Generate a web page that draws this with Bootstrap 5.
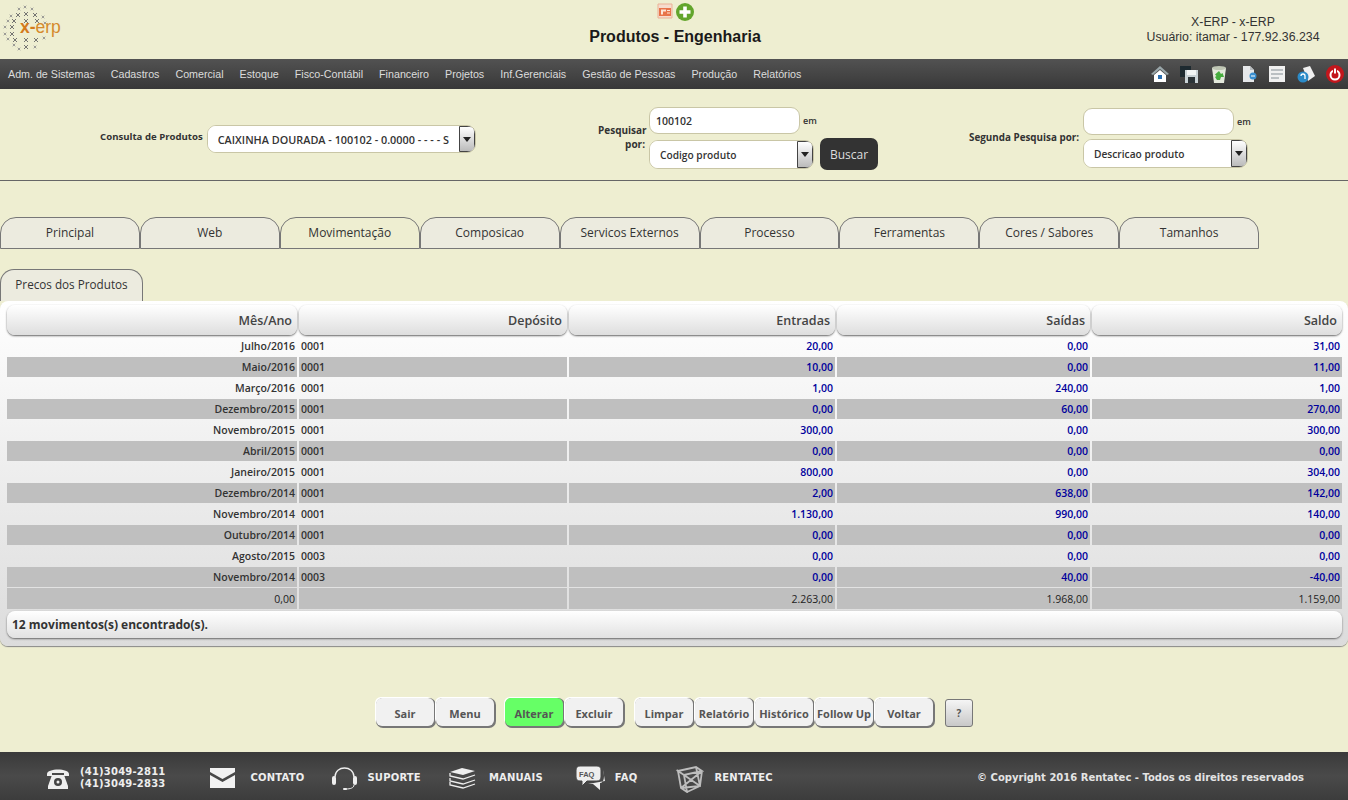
<!DOCTYPE html>
<html lang="pt-BR">
<head>
<meta charset="utf-8">
<title>Produtos - Engenharia</title>
<link href="https://cdn.jsdelivr.net/npm/bootstrap@5.3.0/dist/css/bootstrap.min.css" rel="stylesheet">
<style>
html,body{height:800px;overflow:hidden}
body{background:#eeeed1;font-family:"Open Sans",sans-serif;color:#333;position:relative}
.top{height:59px}
.logo{width:300px;padding-left:2px;padding-top:4px}
.logo svg{display:block}
.head-title{width:750px}
.head-title .ic{height:24px;padding-top:3px;padding-left:1px;gap:3px}
.head-title h1{font:bold 16px/20px "Liberation Sans",sans-serif;color:#1a1a1a;margin:3px 0 0}
.who{font:12.3px/15px "Liberation Sans",sans-serif;color:#333;width:176px;margin-right:27px;padding-top:15px;white-space:nowrap}
.topnav{height:30px;padding:0;background:linear-gradient(#525252,#383838)}
.topnav .nav{padding-left:8px;gap:16px}
.topnav .nav-link{font:10.7px/30px "Liberation Sans",sans-serif;color:#dcdcdc;padding:0}
.tools{margin-left:auto;padding-right:4px;gap:11px}
.tools svg{display:block}
.m2{margin-left:2px}.m4{margin-left:4px}.m1{margin-left:1px}
.search{height:92px;border-bottom:1px solid #666;padding-left:100px}
.lbl{font:bold 10px/14px "Open Sans",sans-serif;color:#333;text-align:right}
.nw{white-space:nowrap}
.g1{width:376px;padding-top:36px}
.g1 .lbl{width:103px;margin-right:4px;padding-top:5px;font-size:9.6px}
.xsel{display:flex;background:#fff;border:1px solid #c9c6a6;border-radius:9px;overflow:hidden}
.xsel select{appearance:none;border:0;background:#fff;flex:1 1 0;min-width:0;font:600 10.2px "Open Sans",sans-serif;color:#333;outline:0;padding:0 0 0 10px}
.xsel.s1 select{font-size:10.85px}
.xsel .arr{flex:0 0 16px;border:1px solid #444;border-radius:0 5px 5px 0;background:linear-gradient(#fff,#bbb);display:flex;align-items:center;justify-content:center}
.xsel.s1{width:270px;height:28px}
.xsel.s2{width:165px;height:29px}
.xinp{width:151px;height:27px;border:1px solid #c9c6a6;border-radius:9px;background:#fff;font:600 10.5px "Open Sans",sans-serif;color:#333;padding:0 6px;outline:0}
.em{font:600 9px/14px "Open Sans",sans-serif;color:#333;margin-left:3px}
.g2{margin-left:122px;width:280px;padding-top:18px}
.g2 .lbl{width:47px;margin-right:4px;padding-top:16px}
.btn-buscar{background:#333;color:#ddd;border:0;border-radius:7px;width:58px;height:32px;font:12px "Open Sans",sans-serif;padding:0;margin-left:6px}
.g2 .bot{margin-top:4px}
.g2 .xsel{margin-top:1px}
.g3{margin-left:91px;padding-top:19px}
.g3 .lbl{width:110px;margin-right:4px;padding-top:22px;font-size:9.85px}
.g3 .bot{margin-top:4px}
.tabs{padding-top:36px;flex-wrap:nowrap}
.tabs .nav-link{width:139.92px;height:32px;background:#ecebdf;border:1px solid #777;border-radius:16px 16px 0 0;font:12px/29px "Open Sans",sans-serif;color:#333;padding:0;text-align:center}
.tabs .nav-link.active{background:#eeeed1}
.sub{padding-top:20px}
.sub .nav-link{width:143px;height:32px;background:#ecebdf;border:1px solid #777;border-bottom:0;border-radius:14px 14px 0 0;font:11.7px/29px "Open Sans",sans-serif;color:#333;padding:0;text-align:center}
.panel-grid{background:linear-gradient(#fff,#dcdcdc);border-radius:8px;height:345px;padding:3px 0 0 5px;box-shadow:0 1px 1px #888}
.grid{width:1339px;table-layout:fixed;border-collapse:separate;border-spacing:2px 1px;margin:0;--bs-table-bg:transparent}
.c1{width:290px}.c2{width:268px}.c3{width:266px}.c4{width:253px}.c5{width:250px}
.grid>*>tr>*{padding:0 2px;border:0;height:20px;font:600 10.5px/20px "Open Sans",sans-serif;color:#333;vertical-align:middle;white-space:nowrap;background:transparent;box-shadow:none}
.grid th{text-align:right}
.grid>thead>tr>th{height:30px;font:600 12.5px/28px "Open Sans",sans-serif;color:#444;padding:2px 5px 0 3px;background:linear-gradient(#fff,#dedede);border-radius:8px;box-shadow:0 1px 2px #666}
.grid td.num{text-align:right}
.grid tbody td.num{color:#00009c}
.grid>tbody>tr:nth-child(even)>*{background:#bfbfbf}
.grid>tbody>tr.tot>*{height:21px;background:#bfbfbf;color:#222;font-weight:400}
.status{margin:1px 6px 0 2px;height:27px;border-radius:8px;background:linear-gradient(#fff,#e2e2e2);box-shadow:0 1px 2px #666;font:700 12px/27px "Open Sans",sans-serif;color:#333;padding-left:5px}
.actions{padding-top:52px;padding-left:376px;height:106px}
.xbtn{width:58px;height:28px;margin-right:2px;background:#f1f1f1;border:0;border-radius:6px;box-shadow:1px 1px 0 1px #777,-1px -1px 0 #fff;font:700 11px "Open Sans",sans-serif;color:#555;padding:2px 0 0}
.xbtn.go{background:#66ff66}
.sep{margin-left:9px}
.sep2{margin-left:10px}
.help{width:28px;height:28px;margin:1px 0 0 10px;border:1px solid #777;border-radius:3px;background:linear-gradient(#f5f5f5,#c8c8c8);font:700 10px "Open Sans",sans-serif;color:#555;padding:0}
.foot{height:48px;padding-top:4px;background:linear-gradient(#3a3a3a,#4a4a4a 50%,#3c3c3c);color:#eee;font:bold 10px/12px "DejaVu Sans",sans-serif;letter-spacing:.2px}
.foot .it{gap:10px}
.foot svg{display:block;flex:none}
.foot a{color:#eee;text-decoration:none}
.i1{margin-left:46px}.i2{margin-left:45px}.i3{margin-left:28px}.i4{margin-left:28px}.i5{margin-left:33px}.i6{margin-left:38px}
.mail{margin-right:5px}.book{margin-right:3px}
.copy{margin-left:auto;padding-right:44px;color:#e4e4e4;letter-spacing:0}
.faqt{font:bold 7.5px "Liberation Sans",sans-serif;fill:#555;letter-spacing:0}
</style>
</head>
<body>
<header class="top d-flex">
  <div class="logo">
    <svg width="60" height="50" viewBox="0 0 60 50" role="img" aria-label="x-erp">
      <defs>
        <path id="m" d="M-2-2L2 2M2-2L-2 2" stroke="#666" stroke-width=".9" fill="none"/>
        <path id="s" d="M-1.300-1.300L1.300 1.300M1.300-1.300L-1.300 1.300" stroke="#888" stroke-width=".8" fill="none"/>
      </defs>
      <use href="#s" x="17" y="5"/><use href="#s" x="23" y="3"/><use href="#s" x="30" y="5"/>
      <use href="#s" x="9" y="12"/><use href="#m" x="16" y="11"/><use href="#m" x="24" y="10"/><use href="#m" x="33" y="11"/><use href="#s" x="41" y="13"/>
      <use href="#s" x="6" y="17"/><use href="#m" x="12" y="17"/><use href="#m" x="24" y="17"/><use href="#m" x="35" y="17"/><use href="#s" x="43" y="19"/>
      <use href="#s" x="3" y="23"/><use href="#m" x="10" y="23"/>
      <use href="#s" x="3" y="30"/><use href="#m" x="10" y="30"/>
      <use href="#s" x="6" y="35"/><use href="#m" x="13" y="36"/><use href="#m" x="24" y="36"/><use href="#m" x="34" y="36"/><use href="#s" x="42" y="34"/>
      <use href="#s" x="12" y="41"/><use href="#m" x="24" y="43"/><use href="#s" x="33" y="43"/><use href="#s" x="17" y="45"/>
      <text x="18" y="29" font-family="Liberation Sans, sans-serif" font-size="17.5" fill="#d58a2c"><tspan font-weight="700" fill="#d47a1c">x-</tspan>erp</text>
    </svg>
  </div>
  <div class="head-title text-center">
    <div class="ic d-flex justify-content-center">
      <svg width="16" height="16" viewBox="0 0 16 16"><path d="M1 1h14v14H1z" fill="#f6dccd" stroke="#eab196"/><path d="M2 5h12v8H2z" fill="#e8744a"/><path d="M4 6.500h5v2H6v3H4zM10 7h3v1h-3zM10 9.500h3v1h-3z" fill="#fde5d8"/></svg>
      <svg width="18" height="18" viewBox="0 0 18 18"><circle cx="9" cy="9" r="9" fill="#62a52c"/><path d="M7.200 3.500h3.600v3.700h3.700v3.600h-3.700v3.700H7.200v-3.700H3.500V7.200h3.700z" fill="#fff"/></svg>
    </div>
    <h1>Produtos - Engenharia</h1>
  </div>
  <div class="who text-center ms-auto">X-ERP - x-ERP<br>Usuário: itamar - 177.92.36.234</div>
</header>
<nav class="navbar topnav">
  <ul class="nav">
    <li class="nav-item"><a class="nav-link" href="#">Adm. de Sistemas</a></li>
    <li class="nav-item"><a class="nav-link" href="#">Cadastros</a></li>
    <li class="nav-item"><a class="nav-link" href="#">Comercial</a></li>
    <li class="nav-item"><a class="nav-link" href="#">Estoque</a></li>
    <li class="nav-item"><a class="nav-link" href="#">Fisco-Contábil</a></li>
    <li class="nav-item"><a class="nav-link" href="#">Financeiro</a></li>
    <li class="nav-item"><a class="nav-link" href="#">Projetos</a></li>
    <li class="nav-item"><a class="nav-link" href="#">Inf.Gerenciais</a></li>
    <li class="nav-item"><a class="nav-link" href="#">Gestão de Pessoas</a></li>
    <li class="nav-item"><a class="nav-link" href="#">Produção</a></li>
    <li class="nav-item"><a class="nav-link" href="#">Relatórios</a></li>
  </ul>
  <div class="tools d-flex align-items-center">
    <svg width="18" height="18" viewBox="0 0 18 18"><path d="M9 1L0 9l2 1 7-6 7 6 2-1z" fill="#9aa7aa"/><path d="M3 10l6-5 6 5v7H3z" fill="#fff"/><path d="M7 10h4v4H7z" fill="#2b6fb0"/></svg>
    <svg width="18" height="18" viewBox="0 0 18 18"><path d="M0 1h11v11H0z" fill="#1e2a30"/><path d="M5 5h13v13H5z" fill="#c9d2d6"/><path d="M7 5h9v5H7z" fill="#f2f5f5"/><path d="M8 12h7v6H8z" fill="#2c3438"/></svg>
    <svg class="m2" width="16" height="18" viewBox="0 0 16 18"><path d="M1 3h14l-2 15H3z" fill="#e4e9dc"/><ellipse cx="8" cy="3" rx="7" ry="2" fill="#bfc6b4"/><path d="M8 6l2 3 1.500-1L13 12h-3l-1 3H6l-2-3 1.500-1L4 9.500z" fill="#46ad3e"/></svg>
    <svg class="m4" width="15" height="18" viewBox="0 0 15 18"><path d="M1 1h7l4 4v12H1z" fill="#e6e8ea"/><path d="M8 1l4 4H8z" fill="#b9bdc0"/><circle cx="11" cy="11" r="3.500" fill="#3a8fd0"/><path d="M9 11h4" stroke="#fff"/></svg>
    <svg class="m1" width="16" height="18" viewBox="0 0 16 18"><path d="M0 1h16v16H0z" fill="#f0f0f0"/><path d="M2 5h12M2 9h12M2 13h8" stroke="#a8aeb2" stroke-width="1.500"/></svg>
    <svg class="m1" width="18" height="18" viewBox="0 0 18 18"><path d="M6 3l7-2 5 10-7 5z" fill="#f0f0f0"/><circle cx="6" cy="12" r="5.500" fill="#2b8bc8"/><path d="M4 11a2 2 0 0 1 4 0v3" stroke="#fff" fill="none" stroke-width="1.300"/></svg>
    <svg width="18" height="18" viewBox="0 0 18 18"><circle cx="9" cy="9" r="9" fill="#c4161c"/><circle cx="9" cy="10" r="4.500" fill="none" stroke="#fff" stroke-width="2"/><path d="M9 3v6" stroke="#c4161c" stroke-width="4"/><path d="M9 3.500v5" stroke="#fff" stroke-width="2"/></svg>
  </div>
</nav>
<section class="search d-flex">
  <div class="g1 d-flex">
    <label class="lbl nw">Consulta de Produtos</label>
    <div class="xsel s1"><select aria-label="Consulta de Produtos"><option>CAIXINHA DOURADA - 100102 - 0.0000 - - - - S</option></select><span class="arr"><svg width="8" height="5" viewBox="0 0 8 5"><path d="M0 0h8L4 5z" fill="#222"/></svg></span></div>
  </div>
  <div class="g2 d-flex">
    <label class="lbl">Pesquisar por:</label>
    <div>
      <div class="d-flex align-items-center"><input class="xinp" value="100102" aria-label="Pesquisar"><span class="em">em</span></div>
      <div class="bot d-flex align-items-center"><div class="xsel s2"><select aria-label="Campo"><option>Codigo produto</option></select><span class="arr"><svg width="8" height="5" viewBox="0 0 8 5"><path d="M0 0h8L4 5z" fill="#222"/></svg></span></div><button class="btn btn-buscar" type="button">Buscar</button></div>
    </div>
  </div>
  <div class="g3 d-flex">
    <label class="lbl nw">Segunda Pesquisa por:</label>
    <div>
      <div class="d-flex align-items-center"><input class="xinp" aria-label="Segunda pesquisa"><span class="em">em</span></div>
      <div class="bot"><div class="xsel s2"><select aria-label="Campo 2"><option>Descricao produto</option></select><span class="arr"><svg width="8" height="5" viewBox="0 0 8 5"><path d="M0 0h8L4 5z" fill="#222"/></svg></span></div></div>
    </div>
  </div>
</section>
<ul class="nav tabs">
  <li><a class="nav-link" href="#">Principal</a></li>
  <li><a class="nav-link" href="#">Web</a></li>
  <li><a class="nav-link active" href="#">Movimentação</a></li>
  <li><a class="nav-link" href="#">Composicao</a></li>
  <li><a class="nav-link" href="#">Servicos Externos</a></li>
  <li><a class="nav-link" href="#">Processo</a></li>
  <li><a class="nav-link" href="#">Ferramentas</a></li>
  <li><a class="nav-link" href="#">Cores / Sabores</a></li>
  <li><a class="nav-link" href="#">Tamanhos</a></li>
</ul>
<ul class="nav sub"><li><a class="nav-link" href="#">Precos dos Produtos</a></li></ul>
<div class="panel-grid">
  <table class="table grid">
    <colgroup><col class="c1"><col class="c2"><col class="c3"><col class="c4"><col class="c5"></colgroup>
    <thead><tr><th>Mês/Ano</th><th>Depósito</th><th>Entradas</th><th>Saídas</th><th>Saldo</th></tr></thead>
    <tbody>
      <tr><th>Julho/2016</th><td>0001</td><td class="num">20,00</td><td class="num">0,00</td><td class="num">31,00</td></tr>
      <tr><th>Maio/2016</th><td>0001</td><td class="num">10,00</td><td class="num">0,00</td><td class="num">11,00</td></tr>
      <tr><th>Março/2016</th><td>0001</td><td class="num">1,00</td><td class="num">240,00</td><td class="num">1,00</td></tr>
      <tr><th>Dezembro/2015</th><td>0001</td><td class="num">0,00</td><td class="num">60,00</td><td class="num">270,00</td></tr>
      <tr><th>Novembro/2015</th><td>0001</td><td class="num">300,00</td><td class="num">0,00</td><td class="num">300,00</td></tr>
      <tr><th>Abril/2015</th><td>0001</td><td class="num">0,00</td><td class="num">0,00</td><td class="num">0,00</td></tr>
      <tr><th>Janeiro/2015</th><td>0001</td><td class="num">800,00</td><td class="num">0,00</td><td class="num">304,00</td></tr>
      <tr><th>Dezembro/2014</th><td>0001</td><td class="num">2,00</td><td class="num">638,00</td><td class="num">142,00</td></tr>
      <tr><th>Novembro/2014</th><td>0001</td><td class="num">1.130,00</td><td class="num">990,00</td><td class="num">140,00</td></tr>
      <tr><th>Outubro/2014</th><td>0001</td><td class="num">0,00</td><td class="num">0,00</td><td class="num">0,00</td></tr>
      <tr><th>Agosto/2015</th><td>0003</td><td class="num">0,00</td><td class="num">0,00</td><td class="num">0,00</td></tr>
      <tr><th>Novembro/2014</th><td>0003</td><td class="num">0,00</td><td class="num">40,00</td><td class="num">-40,00</td></tr>
      <tr class="tot"><th>0,00</th><td></td><td class="num">2.263,00</td><td class="num">1.968,00</td><td class="num">1.159,00</td></tr>
    </tbody>
  </table>
  <div class="status">12 movimentos(s) encontrado(s).</div>
</div>
<div class="actions d-flex align-items-start">
  <button class="btn xbtn" type="button">Sair</button><button class="btn xbtn" type="button">Menu</button>
  <button class="btn xbtn go sep" type="button">Alterar</button><button class="btn xbtn" type="button">Excluir</button>
  <button class="btn xbtn sep2" type="button">Limpar</button><button class="btn xbtn" type="button">Relatório</button><button class="btn xbtn" type="button">Histórico</button><button class="btn xbtn" type="button">Follow Up</button><button class="btn xbtn" type="button">Voltar</button>
  <button class="btn help" type="button">?</button>
</div>
<footer class="foot d-flex align-items-center">
  <div class="it d-flex align-items-center i1">
    <svg width="24" height="24" viewBox="0 0 24 24"><path d="M1 8C1 2 23 2 23 8v2h-5V7H6v3H1z" fill="#eee"/><path d="M6 9h12l4 11v3H2v-3z" fill="#eee"/><circle cx="12" cy="16" r="4" fill="#444"/><circle cx="12" cy="16" r="1.500" fill="#eee"/></svg>
    <span>(41)3049-2811<br>(41)3049-2833</span>
  </div>
  <div class="it d-flex align-items-center i2">
    <svg width="25" height="20" viewBox="0 0 25 20" class="mail"><path d="M0 0h25v4L12.500 11 0 4z" fill="#f2f2f2"/><path d="M0 7l12.500 7L25 7v13H0z" fill="#f2f2f2"/></svg>
    <a href="#">CONTATO</a>
  </div>
  <div class="it d-flex align-items-center i3">
    <svg width="25" height="26" viewBox="0 0 25 26"><path d="M3 12C3 0 22 0 22 12" fill="none" stroke="#eee" stroke-width="1.300"/><rect x="0" y="11" width="4" height="9" rx="2" fill="#eee"/><rect x="21" y="11" width="4" height="9" rx="2" fill="#eee"/><path d="M22 20c0 3-4 4-8 4" fill="none" stroke="#eee"/><rect x="11" y="23" width="4" height="2" rx="1" fill="#eee"/></svg>
    <a href="#">SUPORTE</a>
  </div>
  <div class="it d-flex align-items-center i4">
    <svg width="27" height="22" viewBox="0 0 27 22" class="book"><path d="M1 5l12-4 13 3-12 4z" fill="#eee"/><path d="M1 6v3l13 3 12-4M1 11v3l13 3 12-4M1 15v3l13 3 12-4" fill="none" stroke="#eee" stroke-width="1.300"/></svg>
    <a href="#">MANUAIS</a>
  </div>
  <div class="it d-flex align-items-center i5">
    <svg width="29" height="26" viewBox="0 0 29 26"><path d="M27 5c2 6 1 13-3 13l0 7-7-6-5 0 17-3z" fill="#eee"/><path d="M4 1h17c3 0 4 2 4 4v7c0 3-2 4-4 4H11l-5 5v-5H4c-2 0-4-1-4-4V5c0-3 2-4 4-4z" fill="#eee" stroke="#444"/><text x="3" y="11.500" class="faqt">FAQ</text></svg>
    <a href="#">FAQ</a>
  </div>
  <div class="it d-flex align-items-center i6">
    <svg width="29" height="29" viewBox="0 0 29 29"><g fill="none" stroke="#bdbdbd" stroke-width="1.800"><path d="M3 7l18-4 6 4-18 4zM3 7l3 17 6 4-3-17zM27 7l-2 15-13 6M21 3l4 19-19 2M9 11l16 11M6 24L27 7"/></g></svg>
    <a href="#">RENTATEC</a>
  </div>
  <div class="copy">© Copyright 2016 Rentatec - Todos os direitos reservados</div>
</footer>
</body>
</html>
